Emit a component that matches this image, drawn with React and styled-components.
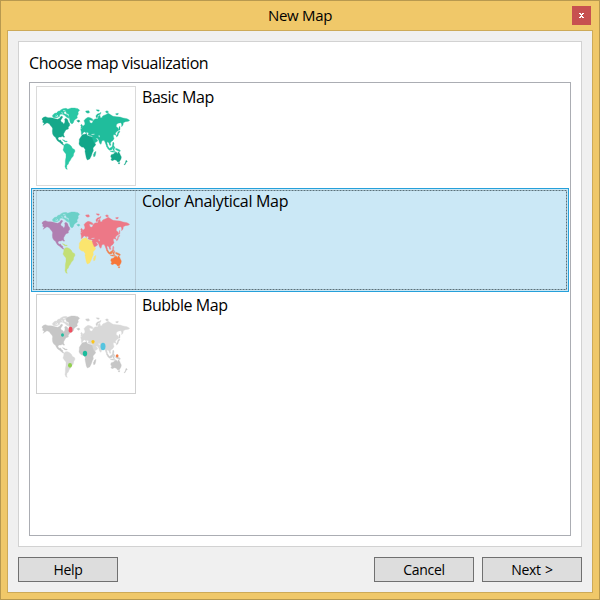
import React from "react";
import styled, { createGlobalStyle } from "styled-components";

const GlobalStyle = createGlobalStyle`
  *, *::before, *::after { box-sizing: border-box; }
  body { margin: 0; overflow: hidden; }
`;

const Window = styled.div`
  width: 600px;
  height: 600px;
  display: flex;
  flex-direction: column;
  padding: 0 6px 6px;
  border: 1px solid #b8994f;
  background: #f0c869;
  color: #000;
  font: 16px/22px "Open Sans", "Noto Sans", sans-serif;
`;

const TitleBar = styled.header`
  height: 29px;
  flex: none;
  display: grid;
  grid-template-columns: 19px 1fr 19px;
  padding: 0 2px;
`;

const Title = styled.h1`
  grid-column: 2;
  margin: 0;
  text-align: center;
  font-size: 15px;
  font-weight: 400;
  line-height: 29px;
  letter-spacing: -0.3px;
`;

const CloseButton = styled.button`
  width: 19px;
  height: 19px;
  margin: 5px 0 0;
  padding: 0;
  border: 0;
  display: grid;
  place-items: center;
  background: #c75050;
`;

const Client = styled.main`
  flex: 1;
  display: flex;
  flex-direction: column;
  gap: 10px;
  padding: 10px;
  border: 1px solid #cdaa58;
  background: #f0f0f0;
`;

const Page = styled.section`
  flex: 1;
  display: flex;
  flex-direction: column;
  padding: 10px;
  border: 1px solid #d2d2d2;
  background: #fff;
`;

const Prompt = styled.h2`
  height: 30px;
  margin: 0;
  font-size: 16px;
  font-weight: 400;
  line-height: 23px;
  letter-spacing: -0.43px;
`;

const List = styled.ul`
  flex: 1;
  margin: 0;
  padding: 1px;
  border: 1px solid #abadb3;
  list-style: none;
`;

const Option = styled.li`
  position: relative;
  height: 104px;
  display: flex;
  gap: 6px;
  padding: 1px 4px;
  border: 1px solid ${(p) => (p.$selected ? "#26a0da" : "transparent")};
  background: ${(p) => (p.$selected ? "#cbe8f6" : "transparent")};
`;

const FocusRing = styled.svg`
  position: absolute;
  inset: 1px;
  width: 534px;
  height: 100px;
  fill: none;
  stroke: #5a7079;
  stroke-dasharray: 2 1;
`;

const Thumb = styled.div`
  width: 100px;
  height: 100px;
  flex: none;
  border: 1px solid ${(p) => p.$border};
  svg { display: block; }
`;

const Label = styled.span`
  letter-spacing: ${(p) => p.$tracking}px;
`;

const Footer = styled.footer`
  height: 25px;
  flex: none;
  display: flex;
  gap: 8px;
`;

const Button = styled.button`
  width: 100px;
  height: 25px;
  margin: 0 ${(p) => (p.$pushRest ? "auto" : "0")} 0 0;
  padding: 1px 0 0;
  border: 1px solid #707070;
  background: #ddd;
  color: #000;
  font: 14px/20px "Open Sans", "Noto Sans", sans-serif;
  letter-spacing: -0.3px;
  word-spacing: 1px;
`;

const LAND = {
  northAmerica:
    "M37 109L41 106L46 104L54 107L61 107L68 108L75 110L83 112L89 109L92 104L96 102L98 106L95 110L92 115L94 120L99 122L101 127L104 122L105 117L104 111L108 109L113 113L115 120L119 125L119 131L115 135L115 141L108 143L105 148L101 155L101 160L104 165L101 166L98 163L92 165L86 165L84 170L87 175L92 174L93 178L98 181L99 187L102 188L100 190L94 185L88 180L83 177L79 171L76 165L72 163L68 156L67 147L68 140L66 136L61 130L58 125L51 122L45 126L39 130L43 124L38 121L39 115L36 113Z",
  arctic:
    "M67 101L72 95L79 92L85 88L92 84L99 80L108 79L114 82L111 87L103 89L101 94L105 96L112 98L117 104L116 109L110 106L104 100L98 97L90 97L88 104L81 107L74 107L69 106Z",
  greenland:
    "M108 87L115 81L124 78L134 78L144 80L149 85L144 90L145 96L141 102L142 108L136 112L132 116L130 122L126 126L121 122L119 114L117 105L116 97L109 94Z",
  iceland: "M140 116L147 114L150 118L145 121Z",
  caribbean: "M97 173L102 174L106 177L112 178L110 180L104 179L101 176Z",
  southAmerica:
    "M102 190L107 185L113 185L119 188L124 193L127 199L134 203L135 208L131 215L130 222L124 229L121 235L117 240L115 246L111 250L110 257L112 262L108 261L105 254L106 246L106 236L108 226L108 216L103 210L99 204L101 198Z",
  eurasia:
    "M154 150L152 142L157 137L157 132L161 131L165 127L164 121L162 116L167 110L174 106L180 107L188 111L188 117L183 115L178 114L180 122L186 124L189 118L191 113L198 110L204 110L205 103L210 100L211 107L216 107L218 102L227 98L235 94L243 99L249 103L260 104L270 105L279 108L291 110L299 115L295 118L286 119L280 122L279 129L275 134L275 126L272 122L264 124L259 128L259 134L264 138L267 144L262 148L258 151L256 155L261 163L255 158L250 158L250 163L252 170L248 176L243 179L241 184L243 190L239 190L237 184L234 180L232 179L231 184L233 190L231 195L228 188L225 180L222 175L216 176L213 187L209 184L206 174L202 169L197 169L203 174L202 178L195 182L190 184L185 175L184 167L188 163L183 161L176 160L174 158L176 153L170 150L169 155L166 151L162 149L159 154L154 158Z",
  britain: "M154 127L157 129L157 137L152 139L154 134L152 131Z",
  africa:
    "M148 172L153 164L157 158L164 157L170 155L171 160L178 163L185 164L188 173L191 181L197 186L196 190L189 198L190 206L187 212L184 221L179 231L172 234L169 228L167 218L165 208L166 203L161 196L155 195L149 190L147 185L148 178Z",
  madagascar: "M194 211L198 208L197 215L195 223L191 224L190 218Z",
  islands:
    "M167 87L176 86L179 91L174 94L168 91Z M198 101L202 96L209 94L213 91L211 97L204 100L202 107L198 106Z M199 83L208 84L207 88L201 87Z M226 89L231 86L236 90L231 94Z M257 95L265 94L264 98L258 98Z",
  japan: "M263 152L267 147L270 149L266 154L264 161L259 165L261 160ZM267 135L270 133L270 143L267 145Z M249 180L252 183L251 192L255 196L252 199L247 193L248 185Z",
  indonesia:
    "M230 191L234 193L238 199L241 204L239 205L234 201L231 196ZM239 199L246 194L250 192L248 200L244 204L239 203Z M249 199L255 197L252 201L254 206L249 205ZM257 199L264 201L271 205L270 209L263 206L257 203ZM240 207L248 207L257 209L256 211L246 210Z",
  australia:
    "M244 218L251 216L254 212L259 210L262 215L265 209L268 212L271 219L274 225L273 231L268 239L263 240L259 235L254 233L246 236L243 233L245 229L242 223ZM265 242L270 242L268 246L265 245Z",
  newZealand: "M288 235L292 238L288 242L285 248L282 248L286 243Z",
};

const ARCHIPELAGO = "M77 91L81 92M87 86L91 85M94 92L99 94M80 98L84 102M93 99L97 100M99 86L106 86M76 102L86 105";

const PALETTES = {
  basic: {
    northAmerica: "#15a88a", arctic: "#29c7a5", greenland: "#29c7a5", iceland: "#15a88a",
    caribbean: "#29c7a5", southAmerica: "#29c7a5", eurasia: "#20bd9c", britain: "#20bd9c",
    africa: "#12a689", madagascar: "#29b99b", islands: "#20bd9c", japan: "#20bd9c",
    indonesia: "#29c7a5", australia: "#12a689", newZealand: "#12a689",
  },
  color: {
    northAmerica: "#b07fb1", arctic: "#73d3cb", greenland: "#6bd0c8", iceland: "#6bd0c8",
    caribbean: "#c3df76", southAmerica: "#c3df76", eurasia: "#ed7887", britain: "#ed7887",
    africa: "#fbe56e", madagascar: "#f4e37d", islands: "#ed7887", japan: "#e7939e",
    indonesia: "#ef8450", australia: "#f77739", newZealand: "#cbe8f6",
  },
  bubble: {
    northAmerica: "#c6c6c6", arctic: "#d8d8d8", greenland: "#c6c6c6", iceland: "#c6c6c6",
    caribbean: "#c6c6c6", southAmerica: "#d8d8d8", eurasia: "#d8d8d8", britain: "#d8d8d8",
    africa: "#c6c6c6", madagascar: "#c6c6c6", islands: "#d0d0d0", japan: "#cecece",
    indonesia: "#cecece", australia: "#c6c6c6", newZealand: "#c6c6c6",
  },
};

const BUBBLES = [
  { x: 121.5, y: 119.5, rx: 6, ry: 9, fill: "#ee5060" },
  { x: 97.5, y: 135, rx: 4.5, ry: 5, fill: "#23bd9f" },
  { x: 189, y: 155.5, rx: 5, ry: 5.5, fill: "#fac51c" },
  { x: 219, y: 169.5, rx: 7.5, ry: 11, fill: "#55c4df" },
  { x: 165, y: 190.5, rx: 6.5, ry: 8.5, fill: "#1abc9c" },
  { x: 261.5, y: 197.5, rx: 4, ry: 5, fill: "#f37a42" },
  { x: 120, y: 226, rx: 6, ry: 7, fill: "#91d04f" },
];

function WorldMap({ variant }) {
  const palette = PALETTES[variant];
  const water = variant === "color" ? "#cbe8f6" : "#fff";
  return (
    <svg width="98" height="98" viewBox="21 15 294 294" aria-hidden="true">
      {Object.entries(LAND).map(([name, d]) => (
        <path key={name} d={d} fill={palette[name]} stroke={palette[name]} strokeWidth="1" />
      ))}
      <path d={ARCHIPELAGO} fill="none" stroke={water} strokeWidth="1.8" />
      <path d="M205 161L208 159L210 165L207 166Z M184 156L194 155L193 158L185 159Z" fill={water} opacity=".65" />
      {variant === "bubble" &&
        BUBBLES.map((b) => (
          <ellipse key={b.x} cx={b.x} cy={b.y} rx={b.rx} ry={b.ry} fill={b.fill} />
        ))}
    </svg>
  );
}

const OPTIONS = [
  { label: "Basic Map", variant: "basic", tracking: -0.45, border: "#dadada" },
  { label: "Color Analytical Map", variant: "color", tracking: -0.32, border: "#b6ccd8", selected: true },
  { label: "Bubble Map", variant: "bubble", tracking: -0.45, border: "#cfcfcf" },
];

export default function App() {
  return (
    <>
      <GlobalStyle />
      <Window>
        <TitleBar>
          <Title>New Map</Title>
          <CloseButton aria-label="Close">
            <svg width="5" height="5" viewBox="0 0 5 5" fill="#fff" shapeRendering="crispEdges">
              <path d="M0 0h2v1h1V0h2v1H4v1H3v1h1v1h1v1H3V4H2v1H0V4h1V3h1V2H1V1H0z" />
            </svg>
          </CloseButton>
        </TitleBar>
        <Client>
          <Page>
            <Prompt>Choose map visualization</Prompt>
            <List>
              {OPTIONS.map((o) => (
                <Option key={o.variant} $selected={o.selected}>
                  <Thumb $border={o.border}>
                    <WorldMap variant={o.variant} />
                  </Thumb>
                  <Label $tracking={o.tracking}>{o.label}</Label>
                  {o.selected && (
                    <FocusRing viewBox="0 0 534 100">
                      <rect x="0.5" y="0.5" width="533" height="99" />
                    </FocusRing>
                  )}
                </Option>
              ))}
            </List>
          </Page>
          <Footer>
            <Button $pushRest>Help</Button>
            <Button>Cancel</Button>
            <Button>Next &gt;</Button>
          </Footer>
        </Client>
      </Window>
    </>
  );
}
